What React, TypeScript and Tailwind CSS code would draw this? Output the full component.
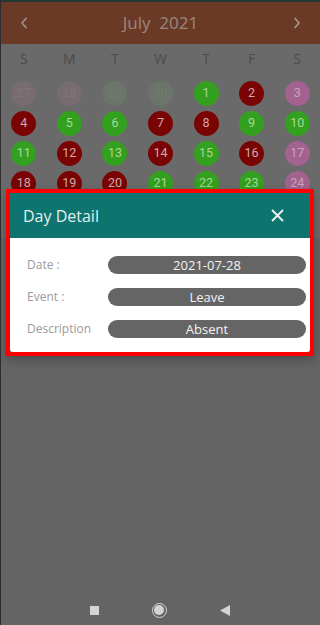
import React from "react";

type Day = { n: number; tone: "green" | "red" | "pink" | "fadePink" | "fadeGreen" };

const rows: Day[][] = [
  [
    { n: 27, tone: "fadePink" },
    { n: 28, tone: "fadePink" },
    { n: 29, tone: "fadeGreen" },
    { n: 30, tone: "fadeGreen" },
    { n: 1, tone: "green" },
    { n: 2, tone: "red" },
    { n: 3, tone: "pink" },
  ],
  [
    { n: 4, tone: "red" },
    { n: 5, tone: "green" },
    { n: 6, tone: "green" },
    { n: 7, tone: "red" },
    { n: 8, tone: "red" },
    { n: 9, tone: "green" },
    { n: 10, tone: "green" },
  ],
  [
    { n: 11, tone: "green" },
    { n: 12, tone: "red" },
    { n: 13, tone: "green" },
    { n: 14, tone: "red" },
    { n: 15, tone: "green" },
    { n: 16, tone: "red" },
    { n: 17, tone: "pink" },
  ],
  [
    { n: 18, tone: "red" },
    { n: 19, tone: "red" },
    { n: 20, tone: "red" },
    { n: 21, tone: "green" },
    { n: 22, tone: "green" },
    { n: 23, tone: "green" },
    { n: 24, tone: "pink" },
  ],
];

const toneClass: Record<Day["tone"], string> = {
  green: "bg-[#34a01f] text-[#a6d89a]",
  red: "bg-[#7a0404] text-[#d2a8a8]",
  pink: "bg-[#a3628f] text-[#c9a3bd]",
  fadePink: "bg-[#786c70] text-[#807578]",
  fadeGreen: "bg-[#6c7569] text-[#737b71]",
};

const weekdays = ["S", "M", "T", "W", "T", "F", "S"];

function Chevron({ dir }: { dir: "left" | "right" }) {
  return (
    <svg width="8" height="12" viewBox="0 0 8 12" fill="none" aria-hidden>
      <path
        d={dir === "left" ? "M6 1.5L2 6l4 4.5" : "M2 1.5L6 6l-4 4.5"}
        stroke="#a0928a"
        strokeWidth="1.8"
        strokeLinecap="round"
        strokeLinejoin="round"
      />
    </svg>
  );
}

function DetailRow({ label, value }: { label: string; value: string }) {
  return (
    <div className="flex items-center">
      <span className="w-[81px] shrink-0 text-[12px] text-[#9b9b9b] leading-none">{label}</span>
      <div className="flex-1 h-[18px] rounded-full bg-[#656565] flex items-center justify-center text-[13px] text-[#f2f2f2] leading-none">
        {value}
      </div>
    </div>
  );
}

export default function App() {
  return (
    <div
      className="relative w-[320px] h-[625px] overflow-hidden flex flex-col bg-[#646464] border-l border-[#2e2e2e]"
      style={{ fontFamily: '"Open Sans", "Noto Sans", sans-serif' }}
    >
      <div className="h-[2px] bg-[#1f3a33]" />

      {/* month header */}
      <div className="h-[42px] flex items-center justify-between px-[19px] bg-[#6b3a26]">
        <Chevron dir="left" />
        <span className="text-[17px] text-[#98887f] whitespace-pre">July  2021</span>
        <Chevron dir="right" />
      </div>

      {/* calendar */}
      <div className="bg-[#6a6a6a] pb-[40px]">
        <div className="grid grid-cols-7 h-[28px] items-center text-center text-[14px] text-[#4c4c4c]">
          {weekdays.map((d, i) => (
            <span key={i}>{d}</span>
          ))}
        </div>
        <div className="mt-[6px] flex flex-col">
          {rows.map((row, r) => (
            <div key={r} className="grid grid-cols-7 h-[30px] items-center">
              {row.map((day, i) => (
                <div key={i} className="flex justify-center">
                  <div
                    className={`w-[25px] h-[25px] rounded-full flex items-center justify-center text-[12.5px] ${toneClass[day.tone]}`}
                    style={{ fontFamily: "Roboto, sans-serif" }}
                  >
                    {day.n}
                  </div>
                </div>
              ))}
            </div>
          ))}
        </div>
      </div>

      <div className="flex-1" />

      {/* system nav bar */}
      <div className="h-[30px] flex items-center justify-center gap-[53px] pr-[2px]">
        <div className="w-[9px] h-[9px] bg-[#d4d4d4]" />
        <div className="w-[15px] h-[15px] rounded-full border border-[#d4d4d4] flex items-center justify-center">
          <div className="w-[10px] h-[10px] rounded-full bg-[#d4d4d4]" />
        </div>
        <svg width="10" height="11" viewBox="0 0 10 11" aria-hidden>
          <path d="M10 0v11L0 5.5z" fill="#d4d4d4" />
        </svg>
      </div>

      {/* day detail dialog */}
      <div className="absolute left-[5px] top-[189px] w-[308px] border-4 border-[#ff0000] shadow-[0_4px_10px_rgba(0,0,0,0.25)]">
        <div className="h-[45px] bg-[#0d7470] flex items-center justify-between pl-[13px] pr-[26px]">
          <span className="text-[16px] text-[#e4efed]">Day Detail</span>
          <svg width="13" height="13" viewBox="0 0 13 13" aria-hidden>
            <path d="M1 1l11 11M12 1L1 12" stroke="#eef5f4" strokeWidth="1.8" />
          </svg>
        </div>
        <div className="bg-white rounded-b-[3px] pt-[18px] pb-[14px] pl-[17px] pr-[4px] flex flex-col gap-[14px]">
          <DetailRow label="Date :" value="2021-07-28" />
          <DetailRow label="Event :" value="Leave" />
          <DetailRow label="Description" value="Absent" />
        </div>
      </div>
    </div>
  );
}
